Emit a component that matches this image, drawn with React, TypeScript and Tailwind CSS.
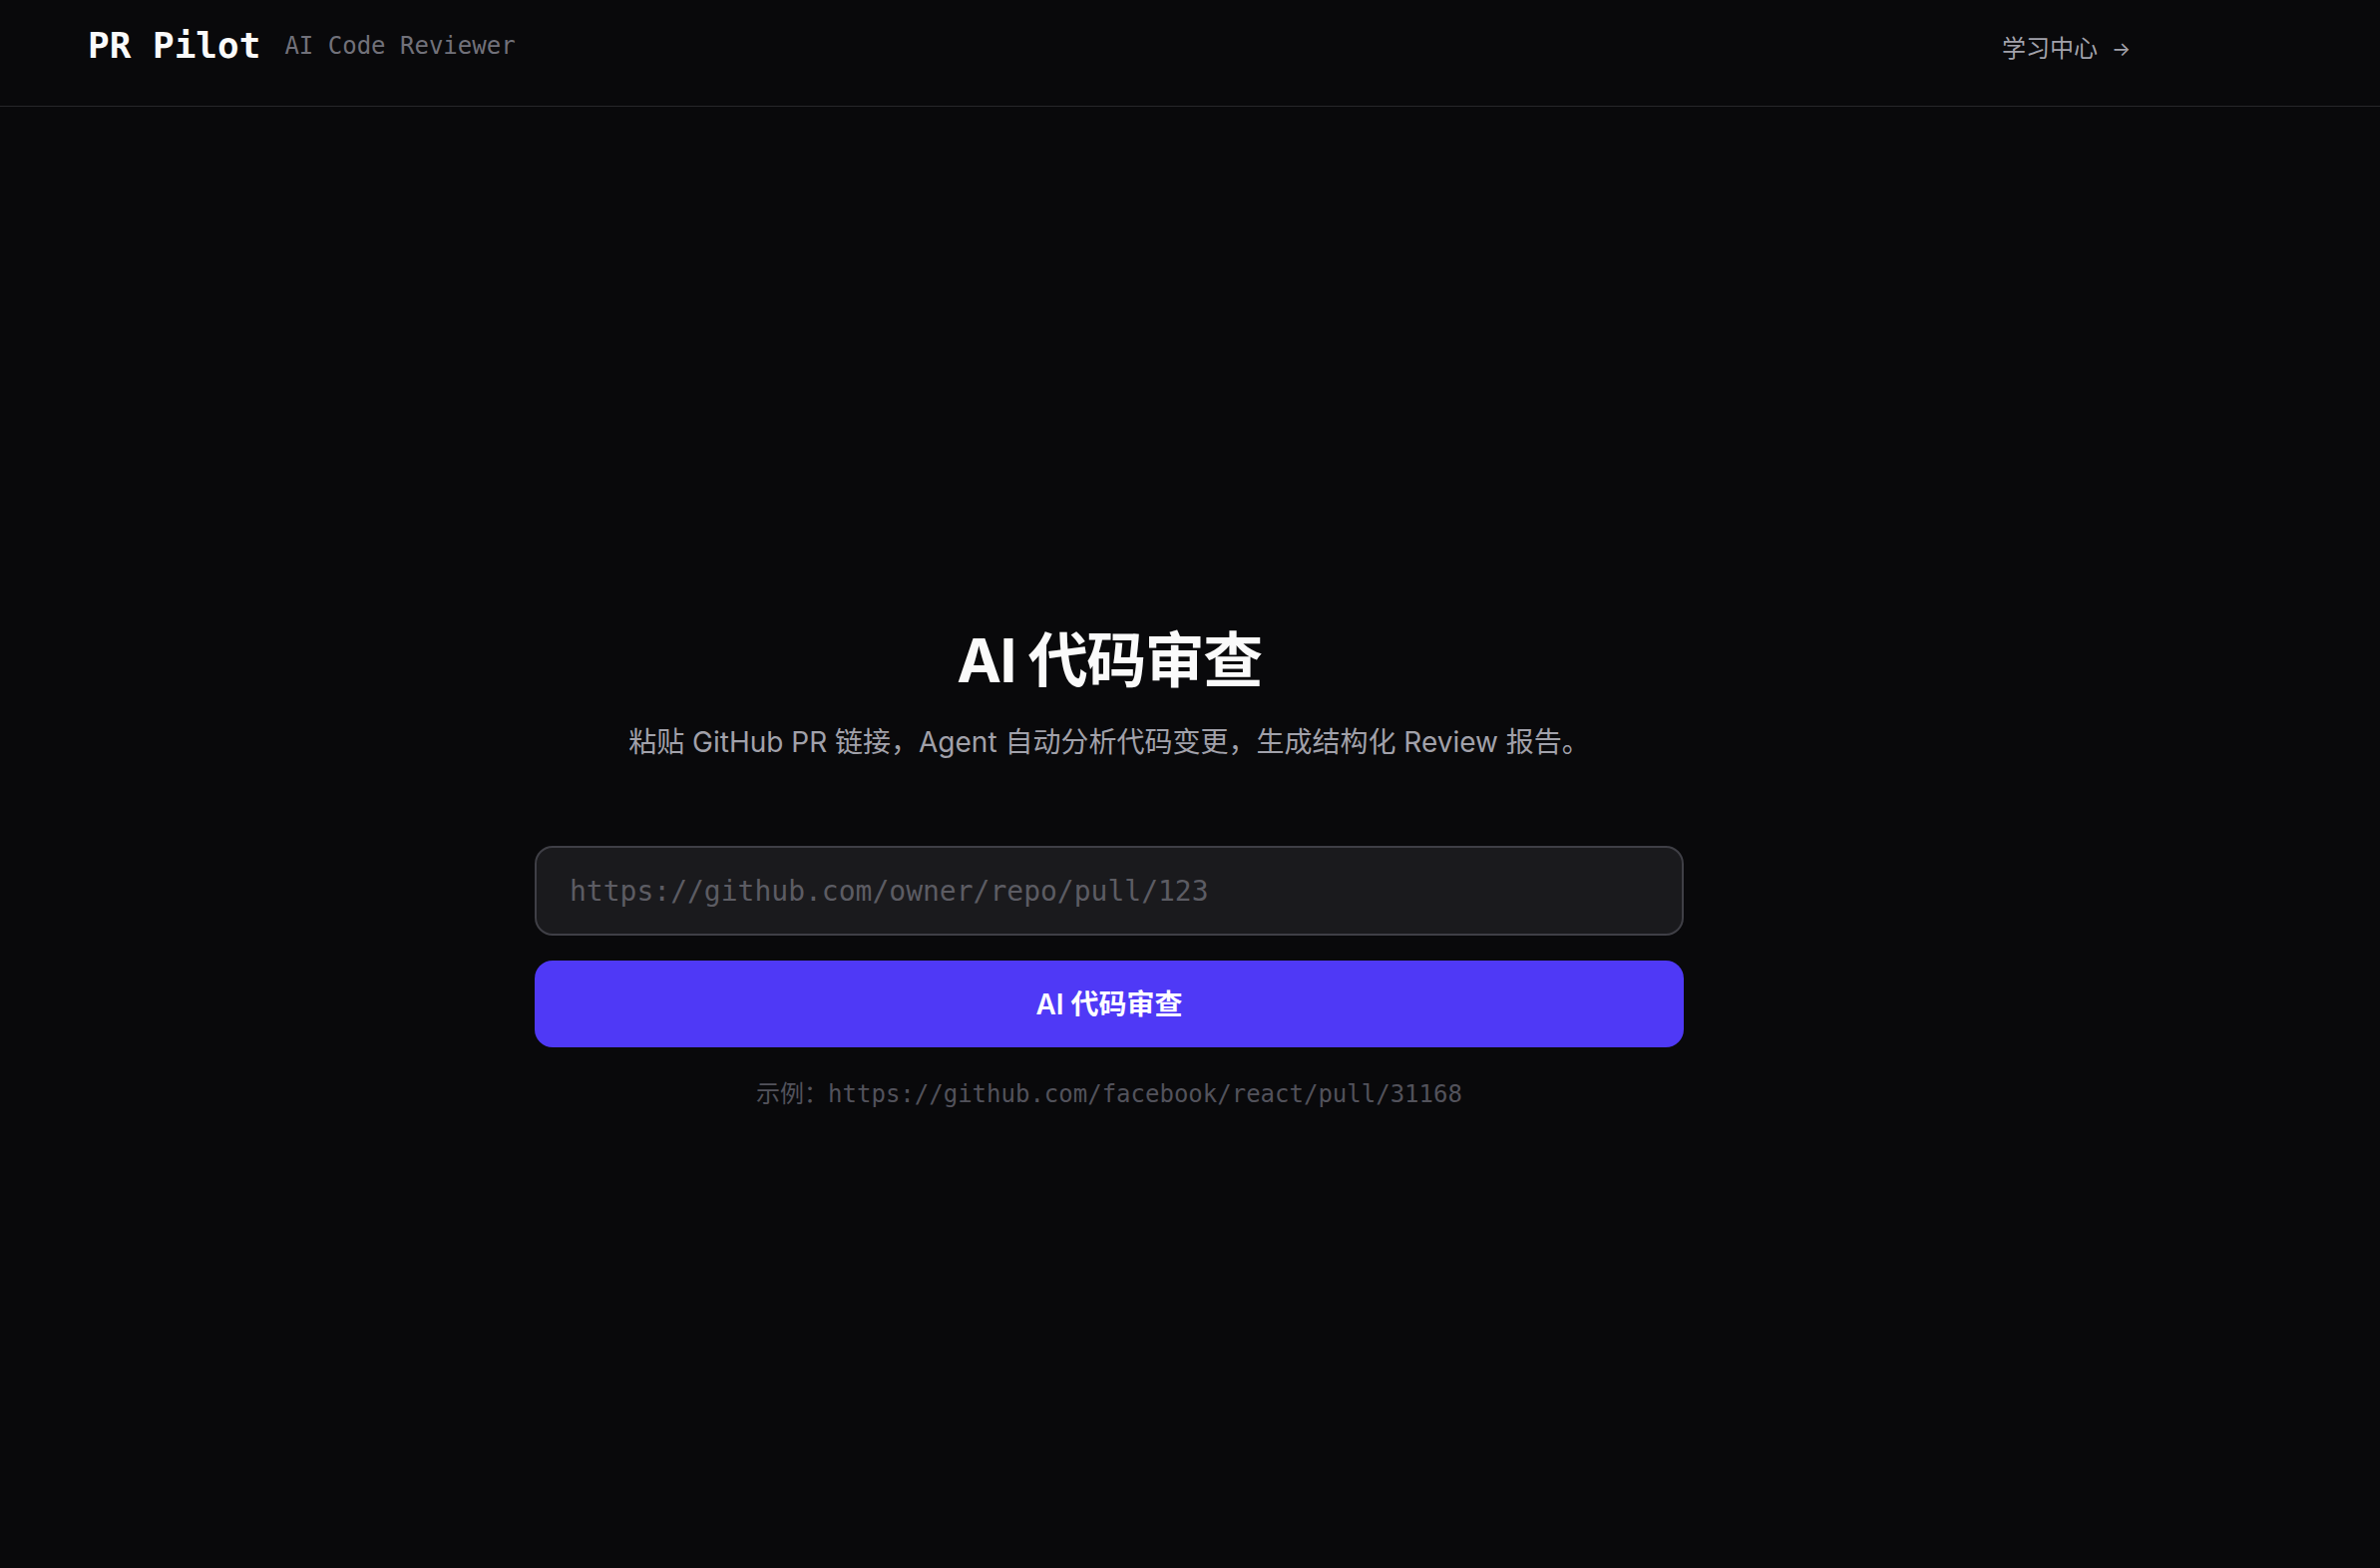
import { useState } from 'react';

const sans = "font-['Inter','Noto_Sans_CJK_SC',sans-serif]";
const mono = "font-['DejaVu_Sans_Mono','Noto_Sans_CJK_SC',monospace]";

export default function App() {
  const [url, setUrl] = useState('');

  return (
    <div className={`min-h-screen bg-[#09090b] text-white ${sans}`}>
      {/* Header */}
      <header className="h-[107px] border-b border-[#27272a]">
        <div className="w-[2224px] px-[88px] pt-[24px] flex items-center justify-between">
          <div className="flex items-center gap-[24px]">
            <span className={`${mono} text-[36px] leading-[1.2] font-bold text-[#fafafa]`}>PR Pilot</span>
            <span className={`${mono} text-[24px] text-[#71717a]`}>AI Code Reviewer</span>
          </div>
          <a href="#" className="mt-[6px] flex items-center gap-[14px] text-[24px] text-[#a1a1aa] hover:text-white">
            <span>学习中心</span>
            <span className="text-[20px]">→</span>
          </a>
        </div>
      </header>

      {/* Main */}
      <main className="w-[2224px] flex flex-col items-center pt-[519px]">
        <h1 className="text-[60px] leading-[72px] font-bold tracking-tight text-[#fafafa]">AI 代码审查</h1>
        <p className="mt-[26px] text-[28px] leading-[40px] text-[#a1a1aa]">
          粘贴 GitHub PR 链接，Agent 自动分析代码变更，生成结构化 Review 报告。
        </p>

        <div className="mt-[84px] w-[1152px] flex flex-col gap-[25px]">
          <input
            type="text"
            value={url}
            onChange={(e) => setUrl(e.target.value)}
            placeholder="https://github.com/owner/repo/pull/123"
            className={`${mono} h-[90px] w-full rounded-[18px] border-2 border-[#3f3f46] bg-[#1a1a1d] px-[33px] text-[28px] text-[#e4e4e7] placeholder-[#5c5c63] focus:outline-none`}
          />
          <button className="h-[87px] w-full rounded-[18px] bg-[#4f39f6] text-[28px] font-semibold text-white hover:bg-[#4530e0]">
            AI 代码审查
          </button>
        </div>

        <p className={`${mono} mt-[29px] text-[24px] leading-[36px] text-[#52525b]`}>
          示例：https://github.com/facebook/react/pull/31168
        </p>
      </main>
    </div>
  );
}
